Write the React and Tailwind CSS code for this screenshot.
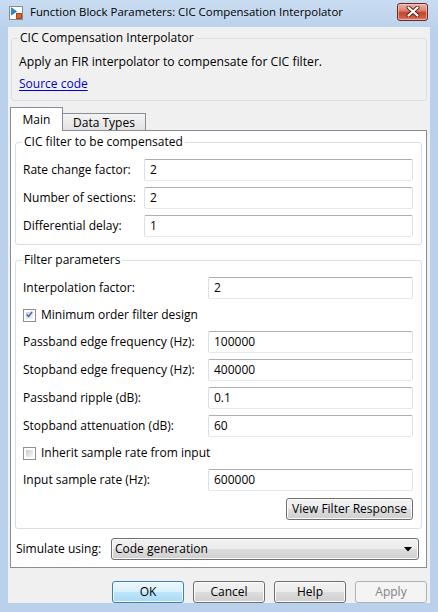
import React from "react";

const btnGrad =
  "bg-[linear-gradient(to_bottom,#f2f2f2_0%,#ebebeb_50%,#dddddd_50%,#cfcfcf_100%)]";

function GroupBox({ title, legendBg, className, children }) {
  return (
    <div
      className={
        "relative border border-[#d5dfe5] rounded-[3px] " + className
      }
    >
      <span
        className={
          "absolute -top-[9px] left-[6px] px-[2px] leading-[16px] whitespace-nowrap " +
          legendBg
        }
      >
        {title}
      </span>
      {children}
    </div>
  );
}

function TextBox({ value }) {
  return (
    <div className="flex-1 h-[22px] flex items-center bg-white border border-[#dbdfe6] border-t-[#abadb3] border-b-[#e3e9ef] rounded-[2px] pl-[5px] leading-[16px] text-black">
      {value}
    </div>
  );
}

function Field({ label, value, labelW }) {
  return (
    <div className="flex items-center h-[22px]">
      <div className={"shrink-0 whitespace-nowrap leading-[16px] " + labelW}>
        {label}
      </div>
      <TextBox value={value} />
    </div>
  );
}

function CheckBox({ checked, label }) {
  return (
    <div className="flex items-center h-[20px]">
      <div className="w-[13px] h-[13px] border border-[#8e8f8f] bg-white p-[2px] shrink-0">
        <div className="w-full h-full bg-[linear-gradient(135deg,#c6cbd2_0%,#e4e6ea_60%,#f7f7f7_100%)] flex items-center justify-center">
          {checked && (
            <svg width="9" height="9" viewBox="0 0 9 9" className="-mt-[1px]">
              <path
                d="M1 4.6 L3.4 7.2 L8 0.8"
                fill="none"
                stroke="#4a5fa6"
                strokeWidth="1.8"
                strokeLinejoin="round"
              />
            </svg>
          )}
        </div>
      </div>
      <span className="ml-[5px] leading-[16px] whitespace-nowrap">{label}</span>
    </div>
  );
}

function Button({ children, className = "", variant = "normal" }) {
  let cls =
    "h-[22px] flex items-center justify-center rounded-[3px] border leading-[16px] whitespace-nowrap ";
  if (variant === "default") {
    cls +=
      "border-[#3c7fb1] bg-[linear-gradient(to_bottom,#eaf6fd_0%,#d9f0fc_50%,#bee6fd_50%,#a7d9f5_100%)] shadow-[inset_0_0_0_1px_#f4fbff] text-black ";
  } else if (variant === "disabled") {
    cls += "border-[#adb2b5] bg-[#f4f4f4] text-[#838383] ";
  } else {
    cls += "border-[#707070] " + btnGrad + " shadow-[inset_0_0_0_1px_#fbfbfb] text-black ";
  }
  return <div className={cls + className}>{children}</div>;
}

function TitleIcon() {
  return (
    <svg width="14" height="14" viewBox="0 0 14 14">
      <rect x="0.5" y="0.5" width="13" height="13" fill="#f2f2f2" stroke="#8c8c8c" />
      <rect x="1.5" y="1.5" width="11" height="11" fill="#ffffff" />
      <polygon points="2.5,1.8 2.5,9 7.5,5.4" fill="#1f8ad6" stroke="#0d5ea6" strokeWidth="0.6" />
      <rect x="7.5" y="7.5" width="5" height="5" fill="#e8601c" stroke="#8a2d08" strokeWidth="0.8" />
    </svg>
  );
}

function CloseButton() {
  return (
    <div className="w-[31px] h-[18px] rounded-[3px] border border-[#6a2a1f] bg-[linear-gradient(to_bottom,#ebb3a6_0%,#d98571_40%,#c5432a_55%,#d0604a_85%,#e0836c_100%)] shadow-[inset_0_0_0_1px_rgba(255,220,210,0.55)] flex items-center justify-center">
      <svg width="14" height="11" viewBox="0 0 14 11">
        <path d="M2.5 1.5 L11.5 9.5 M11.5 1.5 L2.5 9.5" stroke="#5a2218" strokeWidth="4" strokeLinecap="round" />
        <path d="M2.5 1.5 L11.5 9.5 M11.5 1.5 L2.5 9.5" stroke="#ffffff" strokeWidth="2.2" strokeLinecap="round" />
      </svg>
    </div>
  );
}

export default function App() {
  return (
    <div className="w-[438px] h-[612px] overflow-hidden bg-[#b9d1ea] font-['Open_Sans',sans-serif] text-[12px] text-black flex flex-col">
      {/* title bar */}
      <div className="h-[27px] shrink-0 flex items-center bg-[linear-gradient(to_bottom,#c9dcf1,#bcd3ec)]">
        <div className="ml-[9px] -mt-[2px]">
          <TitleIcon />
        </div>
        <span className="ml-[7px] -mt-[3px] text-[11.4px] leading-[16px] whitespace-nowrap">
          Function Block Parameters: CIC Compensation Interpolator
        </span>
        <div className="ml-auto mr-[10px] -mt-[4px]">
          <CloseButton />
        </div>
      </div>

      {/* client area */}
      <div className="mx-[8px] h-[576px] shrink-0 bg-[#f0f0f0] flex flex-col">
        <GroupBox
          title="CIC Compensation Interpolator"
          legendBg="bg-[#f0f0f0]"
          className="mt-[11px] mx-[3px] h-[63px] pl-[7px] pt-[15px]"
        >
          <div className="leading-[16px] whitespace-nowrap text-[12.2px]">
            Apply an FIR interpolator to compensate for CIC filter.
          </div>
          <div className="mt-[6px] leading-[16px] text-[#0000d4] underline underline-offset-2">
            Source code
          </div>
        </GroupBox>

        {/* tabs */}
        <div className="mt-[6px] ml-[2px] h-[23px] flex items-end shrink-0">
          <div className="relative z-10 w-[53px] h-[24px] -mb-[1px] bg-white border border-b-0 border-[#898c95] flex items-center justify-center leading-[16px] -mt-px">
            Main
          </div>
          <div className="-ml-px w-[84px] h-[17px] border border-b-0 border-[#898c95] bg-[linear-gradient(to_bottom,#f4f4f4,#e2e2e2)] flex items-center justify-center leading-[16px] pt-px">
            Data Types
          </div>
        </div>

        {/* tab panel */}
        <div className="ml-[2px] mr-[3px] h-[438px] shrink-0 bg-white border border-[#898c95] px-[4px] pt-[11px] flex flex-col">
          <GroupBox
            title="CIC filter to be compensated"
            legendBg="bg-white"
            className="h-[103px] pl-[7px] pr-[8px] pt-[16px] flex flex-col gap-[6px]"
          >
            <Field label="Rate change factor:" value="2" labelW="w-[121px]" />
            <Field label="Number of sections:" value="2" labelW="w-[121px]" />
            <Field label="Differential delay:" value="1" labelW="w-[121px]" />
          </GroupBox>

          <GroupBox
            title="Filter parameters"
            legendBg="bg-white"
            className="mt-[15px] h-[269px] pl-[7px] pr-[8px] pt-[16px] flex flex-col gap-[6px]"
          >
            <Field label="Interpolation factor:" value="2" labelW="w-[185px]" />
            <CheckBox checked label="Minimum order filter design" />
            <Field label="Passband edge frequency (Hz):" value="100000" labelW="w-[185px]" />
            <Field label="Stopband edge frequency (Hz):" value="400000" labelW="w-[185px]" />
            <Field label="Passband ripple (dB):" value="0.1" labelW="w-[185px]" />
            <Field label="Stopband attenuation (dB):" value="60" labelW="w-[185px]" />
            <CheckBox label="Inherit sample rate from input" />
            <Field label="Input sample rate (Hz):" value="600000" labelW="w-[185px]" />
            <Button className="self-end w-[127px] mt-px">View Filter Response</Button>
          </GroupBox>

          <div className="mt-[9px] pl-[1px] pr-[3px] flex items-center">
            <div className="w-[95px] shrink-0 leading-[16px] whitespace-nowrap">Simulate using:</div>
            <div className={"flex-1 h-[22px] rounded-[3px] border border-[#707070] shadow-[inset_0_0_0_1px_#fbfbfb] flex items-center pl-[3px] pr-[6px] leading-[16px] " + btnGrad}>
              <span>Code generation</span>
              <svg width="8" height="5" viewBox="0 0 8 5" className="ml-auto">
                <polygon points="0,0 8,0 4,4.5" fill="#000" />
              </svg>
            </div>
          </div>
        </div>

        {/* bottom buttons */}
        <div className="mt-[13px] mr-[3px] flex justify-end gap-[9px]">
          <Button variant="default" className="w-[72px]">OK</Button>
          <Button className="w-[72px]">Cancel</Button>
          <Button className="w-[72px]">Help</Button>
          <Button variant="disabled" className="w-[72px]">Apply</Button>
        </div>
      </div>
    </div>
  );
}
